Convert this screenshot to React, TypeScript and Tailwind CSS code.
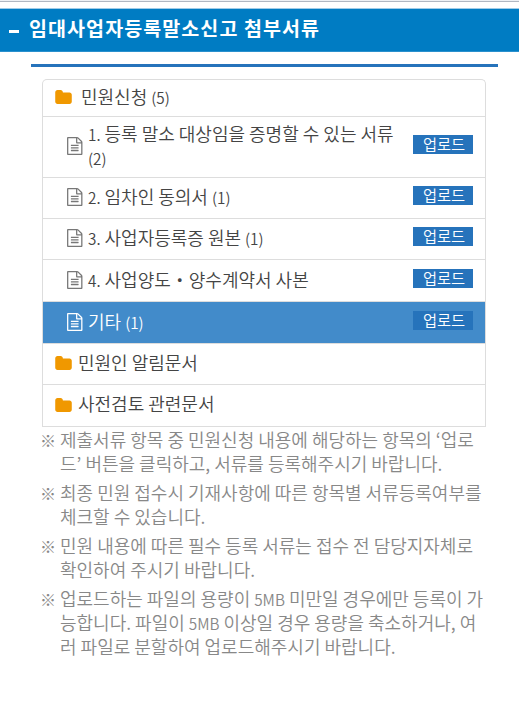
import type { ReactNode } from "react";
import clsx from "clsx";

function FolderIcon() {
  return (
    <svg viewBox="0 128 1664 1408" className="-mt-[2px] h-[14px] w-[17px] shrink-0 fill-[#f09800]">
      <path d="M1664 608v704q0 92-66 158t-158 66h-1216q-92 0-158-66t-66-158v-960q0-92 66-158t158-66h320q92 0 158 66t66 158v32h672q92 0 158 66t66 158z" />
    </svg>
  );
}

function FileIcon() {
  return (
    <svg viewBox="0 0 1536 1792" className="h-[18px] w-[15.5px] shrink-0 fill-current">
      <path d="M1468 380q28 28 48 76t20 88v1152q0 40-28 68t-68 28h-1344q-40 0-68-28t-28-68v-1600q0-40 28-68t68-28h896q40 0 88 20t76 48zm-444-244v376h376q-10-29-22-41l-313-313q-12-12-41-22zm384 1528v-1024h-416q-40 0-68-28t-28-68v-416h-768v1536h1280zm-1024-864q0-14 9-23t23-9h704q14 0 23 9t9 23v64q0 14-9 23t-23 9h-704q-14 0-23-9t-9-23v-64zm736 224q14 0 23 9t9 23v64q0 14-9 23t-23 9h-704q-14 0-23-9t-9-23v-64q0-14 9-23t23-9h704zm0 256q14 0 23 9t9 23v64q0 14-9 23t-23 9h-704q-14 0-23-9t-9-23v-64q0-14 9-23t23-9h704z" />
    </svg>
  );
}

function Small({ children }: { children: ReactNode }) {
  return <span className="text-[15.3px] leading-none">{children}</span>;
}

function FolderRow({ children, className }: { children: ReactNode; className: string }) {
  return (
    <li className={clsx("flex items-center border-b border-[#dddddd] pl-3", className)}>
      <FolderIcon />
      <span className="pb-1">{children}</span>
    </li>
  );
}

type FileRowProps = {
  children: ReactNode;
  className: string;
  active?: boolean;
};

function FileRow({ children, className, active = false }: FileRowProps) {
  return (
    <li
      className={clsx(
        "flex items-center border-b border-[#dddddd] pl-6 pr-3",
        active ? "bg-[#428bca] text-white" : "text-[#444444]",
        className,
      )}
    >
      <span className={clsx("-mt-[2px] flex", active ? "text-white" : "text-[#777777]")}>
        <FileIcon />
      </span>
      <div className="ml-[5.5px] flex-1 pb-1 leading-[24px]">{children}</div>
      <button
        type="button"
        className="mb-[5px] flex h-[19px] w-[60px] items-center justify-center bg-[#2673bb] pb-px pl-[2px] text-[15.3px] leading-none text-white"
      >
        업로드
      </button>
    </li>
  );
}

const notes: ReactNode[][] = [
  [
    "제출서류 항목 중 민원신청 내용에 해당하는 항목의 ‘업로",
    "드’ 버튼을 클릭하고, 서류를 등록해주시기 바랍니다.",
  ],
  ["최종 민원 접수시 기재사항에 따른 항목별 서류등록여부를", "체크할 수 있습니다."],
  ["민원 내용에 따른 필수 등록 서류는 접수 전 담당지자체로", "확인하여 주시기 바랍니다."],
  [
    <>업로드하는 파일의 용량이 <Small>5MB</Small> 미만일 경우에만 등록이 가</>,
    <>능합니다. 파일이 <Small>5MB</Small> 이상일 경우 용량을 축소하거나, 여</>,
    "러 파일로 분할하여 업로드해주시기 바랍니다.",
  ],
];

export default function App() {
  return (
    <div className="h-[727px] w-[519px] overflow-hidden whitespace-nowrap bg-white font-['Noto_Sans_CJK_KR',sans-serif] text-[18px] font-[350] text-[#444444]">
      <div className="h-[2px] border-b border-[#b0b7c2] bg-[#eef1f5]" />
      <h1 className="mt-[6px] flex h-[44px] items-center border-y border-t-[#9fcbe8] border-b-[#2a90cd] bg-[#007cc3] pb-[5px] pl-[9px] text-[19.5px] font-bold text-white">
        <span className="mt-[7px] h-[3px] w-[10px] bg-white" />
        <span className="ml-[10px] tracking-[1.1px]">임대사업자등록말소신고 첨부서류</span>
      </h1>

      <main className="ml-[31px] mt-3 w-[467px] border-t-[3px] border-[#2673bb] pl-[11px] pt-3">
        <ul className="w-[444px] rounded-t-[5px] border-x border-t border-[#dddddd]">
          <FolderRow className="h-[37px]">
            <span className="ml-[9px]">민원신청 <Small>(5)</Small></span>
          </FolderRow>
          <FileRow className="h-[61px]">
            <Small>1.</Small> 등록 말소 대상임을 증명할 수 있는 서류
            <br />
            <Small>(2)</Small>
          </FileRow>
          <FileRow className="h-[41px]">
            <Small>2.</Small> 임차인 동의서 <Small>(1)</Small>
          </FileRow>
          <FileRow className="h-[41px]">
            <Small>3.</Small> 사업자등록증 원본 <Small>(1)</Small>
          </FileRow>
          <FileRow className="h-[42px]">
            <Small>4.</Small> 사업양도・양수계약서 사본
          </FileRow>
          <FileRow className="h-[42px]" active>
            기타 <Small>(1)</Small>
          </FileRow>
          <FolderRow className="h-[41px]">
            <span className="ml-[6px]">민원인 알림문서</span>
          </FolderRow>
          <FolderRow className="h-[42px]">
            <span className="ml-[6px]">사전검토 관련문서</span>
          </FolderRow>
        </ul>

        <ul className="-ml-[2px] flex flex-col gap-[5px] text-[#888888]">
          {notes.map((lines, i) => (
            <li key={i} className="flex leading-[24px]">
              <span className="w-5 pt-px text-[16px]">※</span>
              <div>
                {lines.map((line, j) => (
                  <p key={j}>{line}</p>
                ))}
              </div>
            </li>
          ))}
        </ul>
      </main>
    </div>
  );
}
